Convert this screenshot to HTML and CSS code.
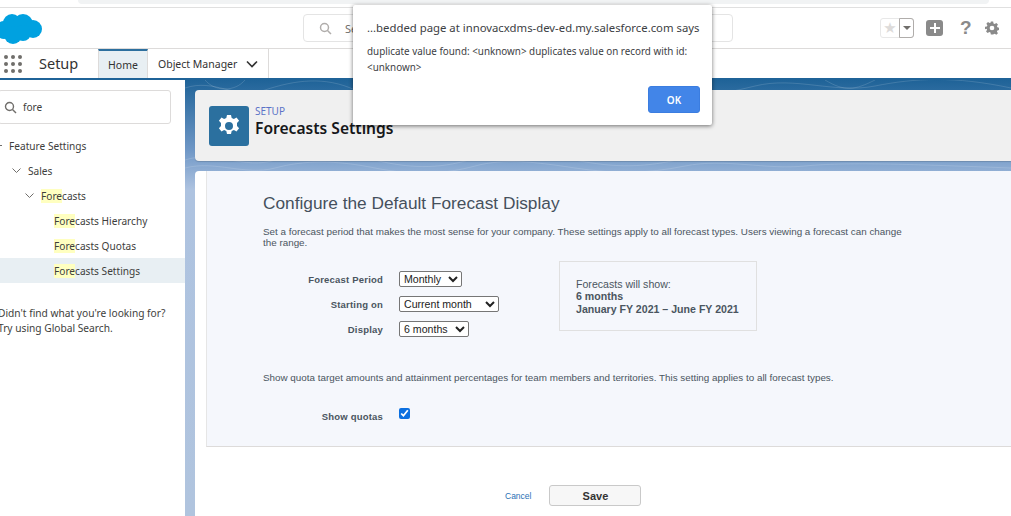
FILE: index.html
```html
<!DOCTYPE html>
<html lang="en">
<head>
  <meta charset="UTF-8" />
  <title>Forecasts Settings</title>
  <link rel="stylesheet" href="styles.css">
</head>
<body>

<div class="chrome"><div class="chrome-pill"></div></div>

<header class="topbar">
  <svg class="logo" width="46" height="34" viewBox="0 0 46 34">
    <g fill="#00a1e0">
      <circle cx="6" cy="19" r="9"/>
      <circle cx="14" cy="12" r="9"/>
      <circle cx="25" cy="13" r="10"/>
      <circle cx="35" cy="18" r="9"/>
      <circle cx="15" cy="24" r="9"/>
      <circle cx="25" cy="22" r="8"/>
    </g>
  </svg>
  <div class="global-search">
    <svg width="13" height="13" viewBox="0 0 13 13" fill="none" stroke="#b0adab" stroke-width="1.5"><circle cx="5.5" cy="5.5" r="4"/><path d="M8.5 8.5l3.5 3.5"/></svg>
    <span>Se</span>
  </div>
  <div class="top-icons">
    <div class="fav">
      <span class="fav-star">★</span>
      <span class="fav-arrow"></span>
    </div>
    <div class="add-btn">
      <svg width="12" height="12" viewBox="0 0 12 12" stroke="#fff" stroke-width="2"><path d="M6 1v10M1 6h10"/></svg>
    </div>
    <span class="help">?</span>
    <svg class="cog" width="14" height="14" viewBox="0 0 24 24"><path fill="#8a8a8a" fill-rule="evenodd" d="M10 1h4l.6 3.2 2 .9 2.8-1.8 2.8 2.8-1.8 2.8.9 2 3.2.6v4l-3.2.6-.9 2 1.8 2.8-2.8 2.8-2.8-1.8-2 .9L14 23h-4l-.6-3.2-2-.9-2.8 1.8-2.8-2.8 1.8-2.8-.9-2L0 14v-4l3.2-.6.9-2-1.8-2.8 2.8-2.8 2.8 1.8 2-.9zM12 8a4 4 0 1 0 0 8 4 4 0 0 0 0-8z"/></svg>
  </div>
</header>

<nav class="navbar">
  <div class="launcher">
    <i></i><i></i><i></i><i></i><i></i><i></i><i></i><i></i><i></i>
  </div>
  <span class="app-name">Setup</span>
  <a class="tab tab-active">Home</a>
  <a class="tab">Object Manager
    <svg class="tab-chevron" width="12" height="8" viewBox="0 0 12 8" fill="none" stroke="#333" stroke-width="1.6"><path d="M1 1.500l5 5 5-5"/></svg>
  </a>
</nav>

<div class="layout">
  <aside class="sidebar">
    <div class="quick-find">
      <svg width="13" height="13" viewBox="0 0 13 13" fill="none" stroke="#706e6b" stroke-width="1.4"><circle cx="5.5" cy="5.5" r="4"/><path d="M8.5 8.5l3.5 3.5"/></svg>
      <span>fore</span>
    </div>
    <ul class="tree">
      <li class="tree-row lvl0"><span class="dash"></span>Feature Settings</li>
      <li class="tree-row lvl1"><svg class="caret" width="9" height="6" viewBox="0 0 9 6" fill="none" stroke="#706e6b"><path d="M.5 .5l4 4 4-4"/></svg>Sales</li>
      <li class="tree-row lvl2"><svg class="caret" width="9" height="6" viewBox="0 0 9 6" fill="none" stroke="#706e6b"><path d="M.5 .5l4 4 4-4"/></svg><mark>Fore</mark>casts</li>
      <li class="tree-row lvl3"><mark>Fore</mark>casts Hierarchy</li>
      <li class="tree-row lvl3"><mark>Fore</mark>casts Quotas</li>
      <li class="tree-row lvl3 selected"><mark>Fore</mark>casts Settings</li>
    </ul>
    <p class="not-found">Didn't find what you're looking for?<br>Try using Global Search.</p>
  </aside>

  <main class="main">
    <svg class="contours" width="826" height="100" viewBox="0 0 826 100" fill="none" stroke="#fff" stroke-opacity=".14">
      <path d="M0 8c30-10 50 12 80 2s60-14 90 0 50 8 90-4 70 10 110 2 60-10 100 0 60 8 100-2 80 8 120 0 80-10 136 2"/>
      <path d="M20 0c10 12 30 12 40 0M200 0c20 14 40 10 50 0M420 0c10 10 40 14 60 0M640 0c20 12 30 10 50 0"/>
      <path d="M0 80c30-10 60 10 90 0s60-10 100 0 70 8 100-2 60-6 100 2 70 8 110-2 80 6 120 0 100-4 206 2"/>
      <path d="M0 88c30-8 60 8 90 0s60-8 100 0 70 6 100-2 60-4 100 2 70 6 110-2 80 4 120 0 100-2 206 2"/>
    </svg>
    <section class="page-header">
      <div class="page-icon">
        <svg width="24" height="24" viewBox="0 0 24 24"><path fill="#fff" fill-rule="evenodd" d="M10 1h4l.7 3 2.2 1 2.6-1.600 2.600 3.400-2.100 2.200v3l2.100 2.200-2.600 3.400-2.600-1.600-2.200 1-.7 3h-4l-.7-3-2.200-1-2.600 1.600-2.600-3.400 2.100-2.200v-3L1.900 6.800 4.500 3.400 7.100 5l2.200-1zM12 8a4 4 0 1 0 0 8 4 4 0 0 0 0-8z"/></svg>
      </div>
      <div>
        <div class="eyebrow">SETUP</div>
        <h1 class="page-title">Forecasts Settings</h1>
      </div>
    </section>

    <section class="panel">
      <div class="config">
        <h2>Configure the Default Forecast Display</h2>
        <p class="intro">Set a forecast period that makes the most sense for your company. These settings apply to all forecast types. Users viewing a forecast can change the range.</p>

        <div class="form-area">
          <div class="form-grid">
            <label>Forecast Period</label>
            <select class="sel-period"><option>Monthly</option></select>
            <label>Starting on</label>
            <select class="sel-start"><option>Current month</option></select>
            <label>Display</label>
            <select class="sel-display"><option>6 months</option></select>
          </div>
          <div class="show-box">
            Forecasts will show:<br>
            <b>6 months</b><br>
            <b>January FY 2021 – June FY 2021</b>
          </div>
        </div>

        <p class="quota-note">Show quota target amounts and attainment percentages for team members and territories. This setting applies to all forecast types.</p>

        <div class="form-grid quota-row">
          <label>Show quotas</label>
          <input type="checkbox" checked>
        </div>
      </div>

      <div class="actions">
        <a class="cancel">Cancel</a>
        <button class="save">Save</button>
      </div>
    </section>
  </main>
</div>

<div class="dialog">
  <div class="dialog-title">...bedded page at innovacxdms-dev-ed.my.salesforce.com says</div>
  <div class="dialog-msg">duplicate value found: &lt;unknown&gt; duplicates value on record with id: &lt;unknown&gt;</div>
  <div class="dialog-foot"><button class="ok">OK</button></div>
</div>

</body>
</html>
```

FILE: styles.css
```css
html, body {
  margin: 0;
  height: 516px;
  overflow: hidden;
}

body {
  font-family: "Liberation Sans", Arial, sans-serif;
  background: #fff;
  color: #333;
}

/* browser strip */
.chrome {
  height: 7px;
  border-bottom: 1px solid #e0e0e0;
  background: #fff;
}

.chrome-pill {
  height: 4px;
  margin: 0 22px 0 78px;
  background: #f1f3f4;
  border-radius: 0 0 10px 10px;
}

/* top bar */
.topbar {
  height: 40px;
  display: flex;
  align-items: center;
  border-bottom: 1px solid #dddbda;
  position: relative;
}

.logo {
  margin-left: -2px;
  flex: none;
}

.global-search {
  margin-left: 259px;
  width: 430px;
  height: 28px;
  box-sizing: border-box;
  border: 1px solid #e4e4e4;
  border-radius: 4px;
  display: flex;
  align-items: center;
  gap: 13px;
  padding-left: 15px;
  font: 11px "Noto Sans", sans-serif;
  color: #706e6b;
}

.top-icons {
  margin-left: 147px;
  display: flex;
  align-items: center;
}

.fav {
  width: 34px;
  height: 20px;
  display: flex;
  border: 1px solid #e8e8e8;
  border-radius: 3px;
  box-sizing: border-box;
}

.fav-star {
  width: 18px;
  color: #dddbda;
  font: 15px/18px "DejaVu Sans", sans-serif;
  text-align: center;
}

.fav-arrow {
  flex: 1;
  border: 1px solid #b0adab;
  border-radius: 0 3px 3px 0;
  margin: -1px -1px -1px 0;
  position: relative;
}

.fav-arrow::after {
  content: "";
  position: absolute;
  left: 3px;
  top: 7px;
  border: 4px solid transparent;
  border-top: 4px solid #706e6b;
  border-bottom: 0;
}

.add-btn {
  margin-left: 12px;
  width: 17px;
  height: 16px;
  background: #8a8a8a;
  border-radius: 3px;
  display: flex;
  align-items: center;
  justify-content: center;
}

.help {
  margin-left: 17px;
  font: bold 19px "Liberation Sans", sans-serif;
  color: #8a8a8a;
}

.cog {
  margin-left: 13px;
  flex: none;
}

/* nav bar */
.navbar {
  height: 29px;
  display: flex;
  font-family: "Noto Sans", sans-serif;
}

.launcher {
  margin: 6px 0 0 4px;
  width: 18px;
  height: 18px;
  display: grid;
  grid-template-columns: repeat(3, 4px);
  grid-auto-rows: 4px;
  gap: 3px;
}

.launcher i {
  background: #706e6b;
  border-radius: 50%;
}

.app-name {
  margin-left: 17px;
  width: 59px;
  font-size: 14.5px;
  line-height: 29px;
  color: #333;
}

.tab {
  display: flex;
  align-items: center;
  font-size: 10.5px;
  color: #333;
  padding: 0 10px;
  box-sizing: border-box;
  border-right: 1px solid #dddbda;
}

.tab-active {
  width: 50px;
  justify-content: center;
  background: #e8eff3;
  border-top: 2px solid #2d6f9e;
  border-left: 1px solid #dddbda;
}

.tab-chevron {
  margin-left: 9px;
}

/* below the nav */
.layout {
  display: flex;
  height: 438px;
  border-top: 2px solid #1f6398;
}

.sidebar {
  width: 185px;
  flex: none;
  font: 10.15px "Noto Sans", sans-serif;
  color: #3e3e3c;
  box-sizing: border-box;
  padding-top: 10px;
}

.quick-find {
  margin: 0 14px 0 -2px;
  height: 34px;
  border: 1px solid #dddbda;
  border-radius: 3px;
  display: flex;
  align-items: center;
  gap: 6px;
  padding-left: 5px;
  box-sizing: border-box;
}

.tree {
  list-style: none;
  margin: 9px 0 0;
  padding: 0;
}

.tree-row {
  height: 25px;
  display: flex;
  align-items: center;
}

.lvl0 { padding-left: 9px; position: relative; }
.lvl1 { padding-left: 12px; }
.lvl2 { padding-left: 25px; }
.lvl3 { padding-left: 54px; }

.dash {
  position: absolute;
  left: 0;
  top: 12px;
  width: 2px;
  height: 1px;
  background: #706e6b;
}

.caret {
  margin-right: 7px;
}

.selected {
  background: #e8eff3;
}

mark {
  background: #ffffc0;
  color: inherit;
  line-height: 14px;
}

.not-found {
  margin: 23px 0 0 -2px;
  line-height: 15px;
  font-size: 10.2px;
}

/* main column */
.main {
  flex: 1;
  min-width: 0;
  position: relative;
  background: linear-gradient(#1f6398 0, #6f97c6 70px, #aec3e0 110px, #b0c4de 100%);
  padding: 10px 0 0 10px;
}

.contours {
  position: absolute;
  left: 0;
  top: 0;
}

.page-header {
  position: relative;
  height: 71px;
  background: #f0f0f0;
  border-radius: 4px 0 0 4px;
  display: flex;
  align-items: center;
  gap: 6px;
  padding-left: 14px;
  box-shadow: 0 1px 1px rgba(0, 0, 0, 0.15);
}

.page-icon {
  width: 40px;
  height: 40px;
  background: #2b709f;
  border-radius: 3px;
  display: flex;
  align-items: center;
  justify-content: center;
}

.eyebrow {
  font: 10px/11px "Noto Sans", sans-serif;
  color: #5b73c7;
  margin-top: -6px;
}

.page-title {
  margin: 0;
  font: 600 15.6px/22px "Noto Sans", sans-serif;
  color: #16171a;
}

.panel {
  position: relative;
  margin-top: 10px;
  height: 345px;
  background: #fff;
  border-radius: 4px 0 0 0;
}

.config {
  margin-left: 11px;
  height: 276px;
  box-sizing: border-box;
  background: #f5f7fc;
  border-left: 1px solid #e6e6e6;
  border-bottom: 1px solid #dddbda;
  padding: 22px 0 0 56px;
  color: #4a5560;
  font-size: 9.85px;
}

.config h2 {
  margin: 0;
  font-size: 17.27px;
  font-weight: normal;
  line-height: 21px;
  color: #45505c;
}

.intro {
  margin: 12px 0 0;
  width: 650px;
  line-height: 11px;
}

.form-area {
  display: flex;
  margin-top: 13px;
}

.form-grid {
  display: grid;
  grid-template-columns: 120px auto;
  column-gap: 16px;
  row-gap: 9px;
  align-items: center;
  justify-items: start;
  width: 296px;
  padding-top: 10px;
}

.form-grid label {
  justify-self: end;
  font-weight: bold;
  font-size: 9.5px;
  letter-spacing: 0.2px;
}

select {
  height: 16px;
  font: 10.6px "Liberation Sans", sans-serif;
  padding: 0;
  background: #fff;
  color: #222;
  border: 1px solid #767676;
  border-radius: 2px;
}

.sel-period { width: 63px; }
.sel-start { width: 100px; }
.sel-display { width: 70px; }

.show-box {
  width: 198px;
  height: 70px;
  box-sizing: border-box;
  border: 1px solid #e0e0e0;
  padding: 16px 0 0 16px;
  line-height: 12.4px;
  font-size: 10.6px;
}

.quota-note {
  margin: 35px 0 0;
  line-height: 11px;
}

.quota-row {
  margin-top: 19px;
  padding-top: 9px;
}

input[type="checkbox"] {
  margin: 0;
  width: 11px;
  height: 11px;
  accent-color: #0b6fe0;
  position: relative;
  top: -3px;
}

.actions {
  display: flex;
  align-items: center;
  gap: 18px;
  margin: 38px 0 0 310px;
}

.cancel {
  font-size: 8.5px;
  color: #2a72b5;
}

.save {
  width: 92px;
  height: 21px;
  padding: 0;
  font: bold 11px "Liberation Sans", sans-serif;
  color: #333;
  background: #f7f7f7;
  border: 1px solid #c9c9c9;
  border-radius: 3px;
}

/* alert on top of everything */
.dialog {
  position: absolute;
  left: 353px;
  top: 5px;
  width: 359px;
  height: 120px;
  box-sizing: border-box;
  background: #fff;
  border-radius: 2px;
  padding: 15px 13px 0 14px;
  box-shadow: 0 1px 4px rgba(0, 0, 0, 0.55);
  font-family: "Noto Sans", sans-serif;
  color: #3c4043;
}

.dialog-title {
  font-size: 11.33px;
  line-height: 16px;
  white-space: nowrap;
}

.dialog-msg {
  margin-top: 7px;
  font-size: 9.85px;
  line-height: 16px;
}

.dialog-foot {
  position: absolute;
  right: 12px;
  bottom: 12px;
}

.ok {
  width: 52px;
  height: 27px;
  background: #4285e8;
  color: #fff;
  border: 1px solid #3b7de0;
  border-radius: 3px;
  font: 600 10px "Noto Sans", sans-serif;
}
```
